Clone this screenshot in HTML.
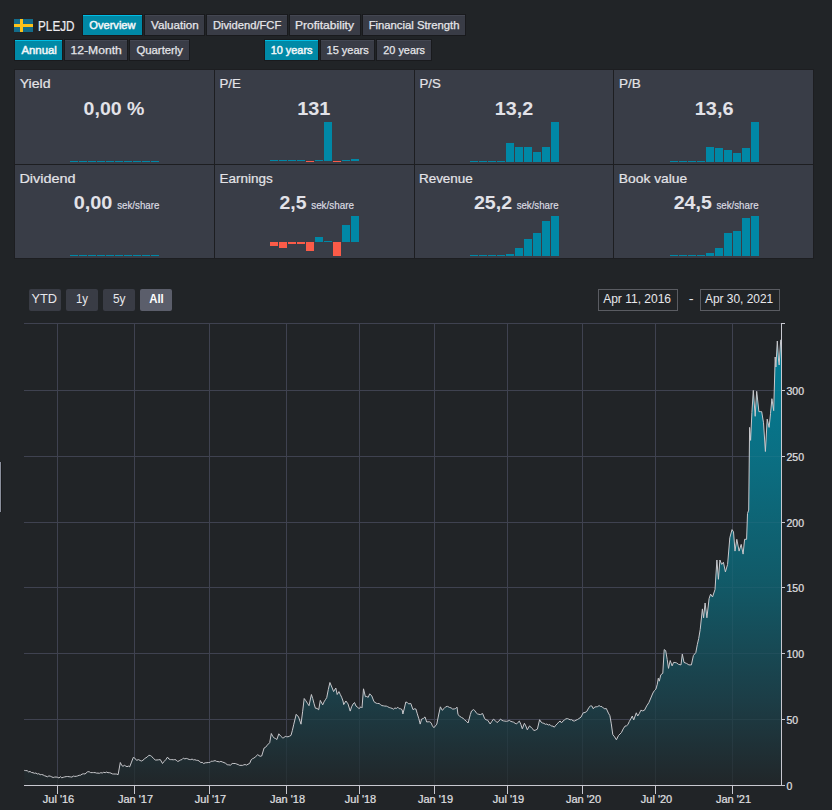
<!DOCTYPE html>
<html><head><meta charset="utf-8">
<style>
html,body{margin:0;padding:0;}
body{width:832px;height:810px;background:#212427;position:relative;overflow:hidden;font-family:"Liberation Sans", sans-serif;color:#e6e6ea;}
svg text{font-family:"Liberation Sans", sans-serif;}
.tb{position:absolute;box-sizing:border-box;height:20px;background:#393c46;border-top:1px solid #444752;box-shadow:0 0 0 1px #191a1d;}
.tb.act{background:#0089a6;border-top:1px solid #00bde4;}
.flag{position:absolute;left:14px;top:19px;width:19px;height:13px;background:#136c8a;}
.flag .v{position:absolute;left:6px;top:0;width:3px;height:13px;background:#fcc21b;}
.flag .h{position:absolute;left:0;top:5px;width:19px;height:3px;background:#fcc21b;}
.grid{position:absolute;left:14px;top:69px;width:800px;height:190px;background:#1d1e21;}
.card{position:absolute;background:#393d47;}
.bar{position:absolute;width:8px;}
.rb{position:absolute;top:289px;width:32px;height:22px;border-radius:2px;background:#393c45;}
.rb.act{background:#5b5e6b;}
.inp{position:absolute;top:289px;height:22px;width:80px;box-sizing:border-box;border:1px solid #5a5c62;}
.ax{font-size:11px;fill:#e0e0e3;stroke:#e0e0e3;stroke-width:0.2px;}
.side{position:absolute;left:0;top:462px;width:1px;height:50px;background:#8a8f9c;border-right:1px solid #18191b;}
</style></head><body>
<div class="flag"><div class="v"></div><div class="h"></div></div>
<div class="tb act" style="left:83px;top:15px;width:59px"></div><div class="tb" style="left:145px;top:15px;width:59px"></div><div class="tb" style="left:207px;top:15px;width:80px"></div><div class="tb" style="left:290px;top:15px;width:70px"></div><div class="tb" style="left:363px;top:15px;width:102px"></div><div class="tb act" style="left:15px;top:40px;width:47px"></div><div class="tb" style="left:65px;top:40px;width:62px"></div><div class="tb" style="left:130px;top:40px;width:59px"></div><div class="tb act" style="left:265px;top:40px;width:53px"></div><div class="tb" style="left:321px;top:40px;width:53px"></div><div class="tb" style="left:377px;top:40px;width:54px"></div>
<div class="grid"></div>
<div class="card" style="left:15px;top:70px;width:199px;height:94px;"></div><div class="bar" style="left:70px;top:161px;height:1px;background:#0088a6"></div><div class="bar" style="left:79px;top:161px;height:1px;background:#0088a6"></div><div class="bar" style="left:88px;top:161px;height:1px;background:#0088a6"></div><div class="bar" style="left:97px;top:161px;height:1px;background:#0088a6"></div><div class="bar" style="left:106px;top:161px;height:1px;background:#0088a6"></div><div class="bar" style="left:115px;top:161px;height:1px;background:#0088a6"></div><div class="bar" style="left:124px;top:161px;height:1px;background:#0088a6"></div><div class="bar" style="left:133px;top:161px;height:1px;background:#0088a6"></div><div class="bar" style="left:142px;top:161px;height:1px;background:#0088a6"></div><div class="bar" style="left:151px;top:161px;height:1px;background:#0088a6"></div><div class="card" style="left:215px;top:70px;width:199px;height:94px;"></div><div class="bar" style="left:270px;top:160px;height:1px;background:#0088a6"></div><div class="bar" style="left:279px;top:160px;height:1px;background:#0088a6"></div><div class="bar" style="left:288px;top:160px;height:1px;background:#0088a6"></div><div class="bar" style="left:297px;top:160px;height:1px;background:#0088a6"></div><div class="bar" style="left:306px;top:161px;height:1px;background:#fb5b48"></div><div class="bar" style="left:315px;top:160px;height:1px;background:#0088a6"></div><div class="bar" style="left:324px;top:122px;height:39px;background:#0088a6"></div><div class="bar" style="left:333px;top:161px;height:1px;background:#fb5b48"></div><div class="bar" style="left:342px;top:160px;height:1px;background:#0088a6"></div><div class="bar" style="left:351px;top:159px;height:2px;background:#0088a6"></div><div class="card" style="left:415px;top:70px;width:198px;height:94px;"></div><div class="bar" style="left:470px;top:161px;height:1px;background:#0088a6"></div><div class="bar" style="left:479px;top:161px;height:1px;background:#0088a6"></div><div class="bar" style="left:488px;top:161px;height:1px;background:#0088a6"></div><div class="bar" style="left:497px;top:161px;height:1px;background:#0088a6"></div><div class="bar" style="left:506px;top:143px;height:19px;background:#0088a6"></div><div class="bar" style="left:515px;top:147px;height:15px;background:#0088a6"></div><div class="bar" style="left:524px;top:147px;height:15px;background:#0088a6"></div><div class="bar" style="left:533px;top:152px;height:10px;background:#0088a6"></div><div class="bar" style="left:542px;top:147px;height:15px;background:#0088a6"></div><div class="bar" style="left:551px;top:122px;height:40px;background:#0088a6"></div><div class="card" style="left:614px;top:70px;width:199px;height:94px;"></div><div class="bar" style="left:670px;top:161px;height:1px;background:#0088a6"></div><div class="bar" style="left:679px;top:161px;height:1px;background:#0088a6"></div><div class="bar" style="left:688px;top:161px;height:1px;background:#0088a6"></div><div class="bar" style="left:697px;top:161px;height:1px;background:#0088a6"></div><div class="bar" style="left:706px;top:147px;height:15px;background:#0088a6"></div><div class="bar" style="left:715px;top:148px;height:14px;background:#0088a6"></div><div class="bar" style="left:724px;top:150px;height:12px;background:#0088a6"></div><div class="bar" style="left:733px;top:153px;height:9px;background:#0088a6"></div><div class="bar" style="left:742px;top:148px;height:14px;background:#0088a6"></div><div class="bar" style="left:751px;top:122px;height:40px;background:#0088a6"></div><div class="card" style="left:15px;top:165px;width:199px;height:93px;"></div><div class="bar" style="left:70px;top:255px;height:1px;background:#0088a6"></div><div class="bar" style="left:79px;top:255px;height:1px;background:#0088a6"></div><div class="bar" style="left:88px;top:255px;height:1px;background:#0088a6"></div><div class="bar" style="left:97px;top:255px;height:1px;background:#0088a6"></div><div class="bar" style="left:106px;top:255px;height:1px;background:#0088a6"></div><div class="bar" style="left:115px;top:255px;height:1px;background:#0088a6"></div><div class="bar" style="left:124px;top:255px;height:1px;background:#0088a6"></div><div class="bar" style="left:133px;top:255px;height:1px;background:#0088a6"></div><div class="bar" style="left:142px;top:255px;height:1px;background:#0088a6"></div><div class="bar" style="left:151px;top:255px;height:1px;background:#0088a6"></div><div class="card" style="left:215px;top:165px;width:199px;height:93px;"></div><div class="bar" style="left:270px;top:242px;height:4px;background:#fb5b48"></div><div class="bar" style="left:279px;top:242px;height:6px;background:#fb5b48"></div><div class="bar" style="left:288px;top:242px;height:2px;background:#fb5b48"></div><div class="bar" style="left:297px;top:242px;height:2px;background:#fb5b48"></div><div class="bar" style="left:306px;top:242px;height:9px;background:#fb5b48"></div><div class="bar" style="left:315px;top:237px;height:5px;background:#0088a6"></div><div class="bar" style="left:324px;top:241px;height:1px;background:#0088a6"></div><div class="bar" style="left:333px;top:242px;height:14px;background:#fb5b48"></div><div class="bar" style="left:342px;top:225px;height:17px;background:#0088a6"></div><div class="bar" style="left:351px;top:216px;height:26px;background:#0088a6"></div><div class="card" style="left:415px;top:165px;width:198px;height:93px;"></div><div class="bar" style="left:470px;top:255px;height:1px;background:#0088a6"></div><div class="bar" style="left:479px;top:255px;height:1px;background:#0088a6"></div><div class="bar" style="left:488px;top:255px;height:1px;background:#0088a6"></div><div class="bar" style="left:497px;top:255px;height:1px;background:#0088a6"></div><div class="bar" style="left:506px;top:254px;height:2px;background:#0088a6"></div><div class="bar" style="left:515px;top:248px;height:8px;background:#0088a6"></div><div class="bar" style="left:524px;top:239px;height:17px;background:#0088a6"></div><div class="bar" style="left:533px;top:233px;height:23px;background:#0088a6"></div><div class="bar" style="left:542px;top:221px;height:35px;background:#0088a6"></div><div class="bar" style="left:551px;top:216px;height:40px;background:#0088a6"></div><div class="card" style="left:614px;top:165px;width:199px;height:93px;"></div><div class="bar" style="left:670px;top:255px;height:1px;background:#0088a6"></div><div class="bar" style="left:679px;top:255px;height:1px;background:#0088a6"></div><div class="bar" style="left:688px;top:255px;height:1px;background:#0088a6"></div><div class="bar" style="left:697px;top:255px;height:1px;background:#0088a6"></div><div class="bar" style="left:706px;top:253px;height:3px;background:#0088a6"></div><div class="bar" style="left:715px;top:248px;height:8px;background:#0088a6"></div><div class="bar" style="left:724px;top:233px;height:23px;background:#0088a6"></div><div class="bar" style="left:733px;top:231px;height:25px;background:#0088a6"></div><div class="bar" style="left:742px;top:218px;height:38px;background:#0088a6"></div><div class="bar" style="left:751px;top:216px;height:40px;background:#0088a6"></div>
<div class="rb" style="left:29px"></div>
<div class="rb" style="left:66px"></div>
<div class="rb" style="left:103px"></div>
<div class="rb act" style="left:140px"></div>
<div class="inp" style="left:598px"></div>
<div class="inp" style="left:700px"></div>
<div class="side"></div>
<svg width="832" height="810" style="position:absolute;left:0;top:0"><defs><linearGradient id="g" gradientUnits="userSpaceOnUse" x1="0" y1="339" x2="0" y2="785"><stop offset="0" stop-color="#007d96"/><stop offset="0.25" stop-color="#0a7084"/><stop offset="0.54" stop-color="#115a68"/><stop offset="0.81" stop-color="#1c3d46"/><stop offset="1" stop-color="#212629"/></linearGradient></defs><path d="M24 323.50 H782 M24 390.50 H782 M24 456.50 H782 M24 522.50 H782 M24 587.50 H782 M24 653.50 H782 M24 719.50 H782 M57.5 323 V785 M134.5 323 V785 M209.5 323 V785 M286.5 323 V785 M359.5 323 V785 M434.5 323 V785 M507.5 323 V785 M582.5 323 V785 M655.5 323 V785 M732.5 323 V785" stroke="#383b47" stroke-width="1" fill="none" shape-rendering="crispEdges"/><path d="M24.3 770.4 L25.7 770.6 L27.2 770.7 L28.6 771.9 L30.1 771.5 L31.5 772.5 L33.0 772.7 L34.4 773.3 L35.9 773.0 L37.3 774.0 L38.8 773.7 L40.2 774.7 L41.6 774.5 L43.1 774.9 L44.5 775.7 L46.0 776.2 L47.4 776.8 L48.9 775.9 L50.3 776.2 L51.8 776.9 L53.2 777.5 L54.6 777.1 L56.1 777.0 L57.5 777.3 L59.0 778.0 L60.4 776.7 L61.8 777.8 L63.3 777.3 L64.7 776.9 L66.2 776.6 L67.6 776.5 L69.1 776.7 L70.5 776.9 L71.9 777.1 L73.4 776.1 L74.8 776.4 L76.3 776.3 L77.7 775.9 L79.2 775.3 L80.6 775.2 L82.1 774.1 L83.5 773.8 L85.0 774.0 L87.5 771.8 L89.1 771.7 L90.6 772.6 L92.2 772.6 L93.6 772.6 L95.1 772.6 L96.5 773.1 L98.0 773.1 L99.4 773.3 L100.8 772.7 L102.3 773.0 L103.7 772.3 L105.2 772.7 L106.6 772.1 L108.0 772.7 L109.5 772.7 L110.9 773.1 L112.3 773.9 L113.8 774.0 L115.2 774.0 L116.7 774.1 L118.1 774.7 L120.3 762.5 L121.7 765.4 L123.0 766.3 L124.4 765.3 L125.7 766.0 L127.0 766.7 L128.4 766.1 L129.7 766.8 L131.5 762.1 L133.3 757.4 L134.9 758.2 L136.5 760.3 L138.7 759.6 L140.1 760.5 L141.5 761.0 L142.9 760.3 L144.4 758.9 L145.9 757.8 L147.3 757.0 L148.8 755.3 L150.2 755.5 L151.6 756.3 L153.4 758.4 L155.3 760.0 L157.0 760.0 L158.6 759.8 L160.3 759.6 L162.5 763.5 L164.2 761.3 L165.8 759.7 L167.5 757.1 L168.9 759.0 L170.4 759.6 L171.8 759.6 L173.3 759.8 L174.7 759.6 L176.1 759.9 L177.6 761.5 L179.1 760.9 L180.5 760.0 L181.9 759.6 L183.4 758.1 L184.8 758.9 L186.3 758.4 L187.7 758.8 L189.2 759.5 L190.6 759.6 L192.1 759.1 L193.5 759.9 L194.9 759.7 L196.4 760.3 L197.8 760.4 L199.3 761.0 L200.7 762.6 L202.2 762.3 L203.6 763.5 L205.3 762.8 L206.9 762.7 L208.6 762.5 L209.9 762.6 L211.2 761.2 L212.5 761.3 L213.8 761.0 L215.1 760.6 L216.6 761.4 L218.0 761.6 L219.5 761.9 L220.9 761.4 L222.4 762.0 L224.0 762.6 L225.6 763.3 L227.2 764.7 L228.8 764.9 L230.5 765.1 L232.2 763.5 L233.9 763.5 L235.3 763.5 L236.8 764.1 L238.2 764.6 L239.7 765.4 L241.0 765.3 L242.4 765.4 L243.7 764.9 L245.1 764.5 L246.4 765.1 L248.0 764.2 L249.6 763.5 L251.2 759.8 L252.5 758.7 L253.9 758.1 L255.2 757.1 L257.7 754.7 L260.1 756.3 L261.7 756.0 L264.1 748.0 L265.7 747.2 L267.3 745.1 L269.7 742.7 L271.3 733.5 L272.9 736.7 L274.2 737.9 L275.6 738.6 L276.9 739.5 L278.8 733.8 L280.6 736.0 L282.5 737.8 L283.8 737.7 L285.2 736.4 L286.5 736.7 L288.0 736.8 L289.5 736.2 L291.0 735.4 L292.4 730.3 L293.8 724.2 L296.2 714.3 L298.6 717.0 L301.0 724.2 L302.6 711.8 L304.2 698.5 L305.8 700.7 L307.4 703.2 L309.0 705.7 L311.4 694.5 L312.7 698.5 L314.1 703.8 L315.4 708.2 L317.0 708.4 L318.7 709.8 L320.3 700.4 L322.7 704.9 L324.0 701.9 L325.4 699.7 L326.7 697.7 L328.3 689.6 L329.9 682.5 L332.2 688.0 L333.6 691.6 L335.8 688.0 L337.2 694.5 L338.9 691.6 L340.3 694.5 L341.6 697.2 L343.0 701.0 L343.7 704.6 L345.9 701.0 L348.0 703.9 L350.2 711.1 L351.6 706.8 L353.1 704.0 L354.5 702.5 L356.0 706.1 L357.4 706.9 L358.9 708.7 L361.0 706.8 L362.0 707.8 L363.5 688.8 L365.4 696.7 L366.8 696.5 L368.2 697.4 L369.7 693.8 L371.8 696.0 L374.0 701.7 L376.2 703.2 L377.6 703.5 L379.1 703.5 L380.5 704.6 L381.9 705.6 L383.4 705.8 L384.8 706.1 L386.3 706.1 L387.7 706.7 L389.2 707.5 L390.6 707.9 L392.1 708.4 L393.5 709.2 L394.9 708.0 L396.4 708.4 L397.8 707.2 L399.2 708.7 L400.7 708.8 L402.1 709.7 L402.9 714.0 L404.4 708.0 L405.8 702.0 L407.2 702.4 L408.6 703.9 L410.8 703.5 L413.0 709.7 L414.4 708.8 L415.9 709.0 L417.3 713.8 L418.8 718.7 L420.2 724.1 L421.6 719.1 L423.3 718.5 L425.0 716.9 L426.7 722.0 L428.1 721.8 L429.6 721.8 L431.0 722.7 L432.4 725.8 L433.9 727.7 L435.4 725.9 L436.8 724.1 L438.6 715.0 L440.4 706.8 L442.2 710.3 L444.0 708.6 L445.8 706.7 L447.6 706.4 L449.4 707.4 L451.1 707.9 L452.7 709.1 L454.4 708.9 L455.7 708.5 L457.0 707.1 L458.0 714.6 L459.8 716.3 L461.6 717.5 L463.1 718.3 L464.5 719.7 L466.3 721.2 L468.1 723.0 L470.3 714.6 L471.5 711.0 L473.5 709.6 L474.8 710.6 L476.2 712.8 L477.5 713.9 L478.9 714.3 L480.4 714.6 L482.6 713.5 L484.7 718.7 L486.1 719.8 L487.6 720.1 L490.2 724.0 L491.8 721.4 L493.4 719.2 L495.2 720.5 L497.0 722.6 L498.8 721.2 L500.6 719.0 L502.0 720.4 L503.5 720.9 L504.9 721.1 L506.4 721.3 L507.8 721.1 L509.3 720.4 L510.8 721.4 L512.2 721.8 L513.6 722.2 L515.1 723.3 L516.5 724.0 L518.0 722.3 L519.4 721.1 L520.8 724.3 L522.3 728.8 L524.4 723.3 L525.8 725.9 L527.3 729.8 L529.5 725.9 L530.9 727.1 L532.4 728.6 L533.8 730.5 L535.6 730.1 L537.4 729.1 L539.6 719.7 L541.0 722.0 L542.5 723.0 L543.9 723.3 L545.4 724.3 L546.8 724.0 L548.4 725.0 L550.0 724.6 L551.4 726.1 L552.9 726.1 L554.3 727.2 L555.8 725.2 L557.2 723.9 L558.7 722.1 L560.1 721.0 L561.5 722.9 L563.0 721.0 L564.4 720.0 L565.8 718.9 L567.3 718.6 L568.7 719.1 L570.2 719.8 L571.6 719.6 L573.0 720.8 L574.5 721.0 L576.0 720.2 L577.4 719.6 L578.9 718.6 L581.0 717.1 L583.2 712.8 L585.0 712.5 L586.8 711.4 L589.0 707.3 L590.4 706.0 L591.8 705.9 L593.3 708.8 L594.7 707.0 L596.2 706.8 L597.6 706.6 L599.1 705.6 L600.5 706.5 L602.0 706.6 L603.4 708.1 L604.8 708.8 L606.3 708.5 L608.4 713.1 L609.9 715.7 L611.3 723.9 L612.8 734.7 L614.6 736.9 L616.4 739.8 L618.5 735.5 L620.0 734.0 L621.4 732.6 L623.2 728.9 L625.0 726.1 L626.5 725.8 L627.9 724.6 L629.3 721.5 L630.8 718.9 L632.3 716.0 L633.7 720.0 L636.3 712.8 L637.7 716.0 L639.3 713.5 L640.9 710.2 L642.7 710.9 L644.5 710.2 L646.7 705.9 L648.8 702.7 L650.4 699.0 L652.9 693.0 L654.4 690.6 L655.9 689.1 L657.3 684.2 L658.3 678.2 L659.3 681.2 L660.8 674.8 L662.8 673.3 L664.2 649.6 L665.7 650.6 L667.2 659.5 L668.5 668.4 L670.2 660.5 L672.1 665.9 L673.6 662.4 L675.1 662.5 L676.6 662.9 L678.6 664.4 L681.0 664.9 L682.3 654.1 L684.0 662.4 L686.5 663.4 L688.9 664.9 L691.4 664.9 L693.4 655.5 L695.8 652.6 L697.3 644.7 L698.7 638.5 L700.2 629.6 L702.4 608.9 L703.6 617.8 L705.1 603.0 L706.9 617.8 L709.1 598.5 L710.6 594.1 L712.5 597.0 L715.0 589.6 L716.9 560.0 L718.4 579.3 L719.9 560.0 L721.7 564.4 L723.4 562.2 L725.4 571.9 L727.6 564.4 L729.8 537.8 L732.0 529.6 L733.5 531.9 L735.0 551.1 L736.8 539.3 L739.1 551.1 L741.2 544.4 L743.1 554.1 L744.6 539.3 L746.6 539.3 L747.5 513.5 L748.7 510.1 L749.6 427.4 L750.6 440.4 L751.9 412.6 L753.3 390.4 L755.2 416.3 L756.7 391.3 L758.9 411.7 L760.3 411.6 L761.7 411.7 L763.5 422.8 L765.4 451.5 L767.2 419.1 L769.1 427.4 L770.5 413.7 L771.9 398.7 L773.7 410.7 L775.2 357.0 L775.9 367.0 L777.3 341.0 L778.6 361.0 L779.2 365.0 L780.7 340.0 L781.5 340.5 L781.5 785 L24.3 785 Z" fill="url(#g)" stroke="none"/><path d="M24 323.50 H782 M24 390.50 H782 M24 456.50 H782 M24 522.50 H782 M24 587.50 H782 M24 653.50 H782 M24 719.50 H782 M57.5 323 V785 M134.5 323 V785 M209.5 323 V785 M286.5 323 V785 M359.5 323 V785 M434.5 323 V785 M507.5 323 V785 M582.5 323 V785 M655.5 323 V785 M732.5 323 V785" stroke="rgba(160,170,200,0.07)" stroke-width="1" fill="none" shape-rendering="crispEdges"/><path d="M24.3 770.4 L25.7 770.6 L27.2 770.7 L28.6 771.9 L30.1 771.5 L31.5 772.5 L33.0 772.7 L34.4 773.3 L35.9 773.0 L37.3 774.0 L38.8 773.7 L40.2 774.7 L41.6 774.5 L43.1 774.9 L44.5 775.7 L46.0 776.2 L47.4 776.8 L48.9 775.9 L50.3 776.2 L51.8 776.9 L53.2 777.5 L54.6 777.1 L56.1 777.0 L57.5 777.3 L59.0 778.0 L60.4 776.7 L61.8 777.8 L63.3 777.3 L64.7 776.9 L66.2 776.6 L67.6 776.5 L69.1 776.7 L70.5 776.9 L71.9 777.1 L73.4 776.1 L74.8 776.4 L76.3 776.3 L77.7 775.9 L79.2 775.3 L80.6 775.2 L82.1 774.1 L83.5 773.8 L85.0 774.0 L87.5 771.8 L89.1 771.7 L90.6 772.6 L92.2 772.6 L93.6 772.6 L95.1 772.6 L96.5 773.1 L98.0 773.1 L99.4 773.3 L100.8 772.7 L102.3 773.0 L103.7 772.3 L105.2 772.7 L106.6 772.1 L108.0 772.7 L109.5 772.7 L110.9 773.1 L112.3 773.9 L113.8 774.0 L115.2 774.0 L116.7 774.1 L118.1 774.7 L120.3 762.5 L121.7 765.4 L123.0 766.3 L124.4 765.3 L125.7 766.0 L127.0 766.7 L128.4 766.1 L129.7 766.8 L131.5 762.1 L133.3 757.4 L134.9 758.2 L136.5 760.3 L138.7 759.6 L140.1 760.5 L141.5 761.0 L142.9 760.3 L144.4 758.9 L145.9 757.8 L147.3 757.0 L148.8 755.3 L150.2 755.5 L151.6 756.3 L153.4 758.4 L155.3 760.0 L157.0 760.0 L158.6 759.8 L160.3 759.6 L162.5 763.5 L164.2 761.3 L165.8 759.7 L167.5 757.1 L168.9 759.0 L170.4 759.6 L171.8 759.6 L173.3 759.8 L174.7 759.6 L176.1 759.9 L177.6 761.5 L179.1 760.9 L180.5 760.0 L181.9 759.6 L183.4 758.1 L184.8 758.9 L186.3 758.4 L187.7 758.8 L189.2 759.5 L190.6 759.6 L192.1 759.1 L193.5 759.9 L194.9 759.7 L196.4 760.3 L197.8 760.4 L199.3 761.0 L200.7 762.6 L202.2 762.3 L203.6 763.5 L205.3 762.8 L206.9 762.7 L208.6 762.5 L209.9 762.6 L211.2 761.2 L212.5 761.3 L213.8 761.0 L215.1 760.6 L216.6 761.4 L218.0 761.6 L219.5 761.9 L220.9 761.4 L222.4 762.0 L224.0 762.6 L225.6 763.3 L227.2 764.7 L228.8 764.9 L230.5 765.1 L232.2 763.5 L233.9 763.5 L235.3 763.5 L236.8 764.1 L238.2 764.6 L239.7 765.4 L241.0 765.3 L242.4 765.4 L243.7 764.9 L245.1 764.5 L246.4 765.1 L248.0 764.2 L249.6 763.5 L251.2 759.8 L252.5 758.7 L253.9 758.1 L255.2 757.1 L257.7 754.7 L260.1 756.3 L261.7 756.0 L264.1 748.0 L265.7 747.2 L267.3 745.1 L269.7 742.7 L271.3 733.5 L272.9 736.7 L274.2 737.9 L275.6 738.6 L276.9 739.5 L278.8 733.8 L280.6 736.0 L282.5 737.8 L283.8 737.7 L285.2 736.4 L286.5 736.7 L288.0 736.8 L289.5 736.2 L291.0 735.4 L292.4 730.3 L293.8 724.2 L296.2 714.3 L298.6 717.0 L301.0 724.2 L302.6 711.8 L304.2 698.5 L305.8 700.7 L307.4 703.2 L309.0 705.7 L311.4 694.5 L312.7 698.5 L314.1 703.8 L315.4 708.2 L317.0 708.4 L318.7 709.8 L320.3 700.4 L322.7 704.9 L324.0 701.9 L325.4 699.7 L326.7 697.7 L328.3 689.6 L329.9 682.5 L332.2 688.0 L333.6 691.6 L335.8 688.0 L337.2 694.5 L338.9 691.6 L340.3 694.5 L341.6 697.2 L343.0 701.0 L343.7 704.6 L345.9 701.0 L348.0 703.9 L350.2 711.1 L351.6 706.8 L353.1 704.0 L354.5 702.5 L356.0 706.1 L357.4 706.9 L358.9 708.7 L361.0 706.8 L362.0 707.8 L363.5 688.8 L365.4 696.7 L366.8 696.5 L368.2 697.4 L369.7 693.8 L371.8 696.0 L374.0 701.7 L376.2 703.2 L377.6 703.5 L379.1 703.5 L380.5 704.6 L381.9 705.6 L383.4 705.8 L384.8 706.1 L386.3 706.1 L387.7 706.7 L389.2 707.5 L390.6 707.9 L392.1 708.4 L393.5 709.2 L394.9 708.0 L396.4 708.4 L397.8 707.2 L399.2 708.7 L400.7 708.8 L402.1 709.7 L402.9 714.0 L404.4 708.0 L405.8 702.0 L407.2 702.4 L408.6 703.9 L410.8 703.5 L413.0 709.7 L414.4 708.8 L415.9 709.0 L417.3 713.8 L418.8 718.7 L420.2 724.1 L421.6 719.1 L423.3 718.5 L425.0 716.9 L426.7 722.0 L428.1 721.8 L429.6 721.8 L431.0 722.7 L432.4 725.8 L433.9 727.7 L435.4 725.9 L436.8 724.1 L438.6 715.0 L440.4 706.8 L442.2 710.3 L444.0 708.6 L445.8 706.7 L447.6 706.4 L449.4 707.4 L451.1 707.9 L452.7 709.1 L454.4 708.9 L455.7 708.5 L457.0 707.1 L458.0 714.6 L459.8 716.3 L461.6 717.5 L463.1 718.3 L464.5 719.7 L466.3 721.2 L468.1 723.0 L470.3 714.6 L471.5 711.0 L473.5 709.6 L474.8 710.6 L476.2 712.8 L477.5 713.9 L478.9 714.3 L480.4 714.6 L482.6 713.5 L484.7 718.7 L486.1 719.8 L487.6 720.1 L490.2 724.0 L491.8 721.4 L493.4 719.2 L495.2 720.5 L497.0 722.6 L498.8 721.2 L500.6 719.0 L502.0 720.4 L503.5 720.9 L504.9 721.1 L506.4 721.3 L507.8 721.1 L509.3 720.4 L510.8 721.4 L512.2 721.8 L513.6 722.2 L515.1 723.3 L516.5 724.0 L518.0 722.3 L519.4 721.1 L520.8 724.3 L522.3 728.8 L524.4 723.3 L525.8 725.9 L527.3 729.8 L529.5 725.9 L530.9 727.1 L532.4 728.6 L533.8 730.5 L535.6 730.1 L537.4 729.1 L539.6 719.7 L541.0 722.0 L542.5 723.0 L543.9 723.3 L545.4 724.3 L546.8 724.0 L548.4 725.0 L550.0 724.6 L551.4 726.1 L552.9 726.1 L554.3 727.2 L555.8 725.2 L557.2 723.9 L558.7 722.1 L560.1 721.0 L561.5 722.9 L563.0 721.0 L564.4 720.0 L565.8 718.9 L567.3 718.6 L568.7 719.1 L570.2 719.8 L571.6 719.6 L573.0 720.8 L574.5 721.0 L576.0 720.2 L577.4 719.6 L578.9 718.6 L581.0 717.1 L583.2 712.8 L585.0 712.5 L586.8 711.4 L589.0 707.3 L590.4 706.0 L591.8 705.9 L593.3 708.8 L594.7 707.0 L596.2 706.8 L597.6 706.6 L599.1 705.6 L600.5 706.5 L602.0 706.6 L603.4 708.1 L604.8 708.8 L606.3 708.5 L608.4 713.1 L609.9 715.7 L611.3 723.9 L612.8 734.7 L614.6 736.9 L616.4 739.8 L618.5 735.5 L620.0 734.0 L621.4 732.6 L623.2 728.9 L625.0 726.1 L626.5 725.8 L627.9 724.6 L629.3 721.5 L630.8 718.9 L632.3 716.0 L633.7 720.0 L636.3 712.8 L637.7 716.0 L639.3 713.5 L640.9 710.2 L642.7 710.9 L644.5 710.2 L646.7 705.9 L648.8 702.7 L650.4 699.0 L652.9 693.0 L654.4 690.6 L655.9 689.1 L657.3 684.2 L658.3 678.2 L659.3 681.2 L660.8 674.8 L662.8 673.3 L664.2 649.6 L665.7 650.6 L667.2 659.5 L668.5 668.4 L670.2 660.5 L672.1 665.9 L673.6 662.4 L675.1 662.5 L676.6 662.9 L678.6 664.4 L681.0 664.9 L682.3 654.1 L684.0 662.4 L686.5 663.4 L688.9 664.9 L691.4 664.9 L693.4 655.5 L695.8 652.6 L697.3 644.7 L698.7 638.5 L700.2 629.6 L702.4 608.9 L703.6 617.8 L705.1 603.0 L706.9 617.8 L709.1 598.5 L710.6 594.1 L712.5 597.0 L715.0 589.6 L716.9 560.0 L718.4 579.3 L719.9 560.0 L721.7 564.4 L723.4 562.2 L725.4 571.9 L727.6 564.4 L729.8 537.8 L732.0 529.6 L733.5 531.9 L735.0 551.1 L736.8 539.3 L739.1 551.1 L741.2 544.4 L743.1 554.1 L744.6 539.3 L746.6 539.3 L747.5 513.5 L748.7 510.1 L749.6 427.4 L750.6 440.4 L751.9 412.6 L753.3 390.4 L755.2 416.3 L756.7 391.3 L758.9 411.7 L760.3 411.6 L761.7 411.7 L763.5 422.8 L765.4 451.5 L767.2 419.1 L769.1 427.4 L770.5 413.7 L771.9 398.7 L773.7 410.7 L775.2 357.0 L775.9 367.0 L777.3 341.0 L778.6 361.0 L779.2 365.0 L780.7 340.0 L781.5 340.5" fill="none" stroke="#c8c8cc" stroke-width="1" stroke-linejoin="round"/><path d="M24 785.5 H782 M781.5 323 V786 M781 323.5 H785" stroke="#c8c8d0" stroke-width="1" fill="none" shape-rendering="crispEdges"/><path d="M57.5 785 V794 M134.5 785 V794 M209.5 785 V794 M286.5 785 V794 M359.5 785 V794 M434.5 785 V794 M507.5 785 V794 M582.5 785 V794 M655.5 785 V794 M732.5 785 V794 M781 785.50 H785 M781 719.50 H785 M781 653.50 H785 M781 587.50 H785 M781 522.50 H785 M781 456.50 H785 M781 390.50 H785" stroke="#c8c8d0" stroke-width="1" fill="none" shape-rendering="crispEdges"/><text x="58.5" y="803" text-anchor="middle" class="ax">Jul &#39;16</text><text x="135.5" y="803" text-anchor="middle" class="ax">Jan &#39;17</text><text x="210.5" y="803" text-anchor="middle" class="ax">Jul &#39;17</text><text x="287.5" y="803" text-anchor="middle" class="ax">Jan &#39;18</text><text x="360.5" y="803" text-anchor="middle" class="ax">Jul &#39;18</text><text x="435.5" y="803" text-anchor="middle" class="ax">Jan &#39;19</text><text x="508.5" y="803" text-anchor="middle" class="ax">Jul &#39;19</text><text x="583.5" y="803" text-anchor="middle" class="ax">Jan &#39;20</text><text x="656.5" y="803" text-anchor="middle" class="ax">Jul &#39;20</text><text x="733.5" y="803" text-anchor="middle" class="ax">Jan &#39;21</text><text x="786.5" y="789.5" class="ax" style="font-size:10.5px">0</text><text x="786.5" y="723.5" class="ax" style="font-size:10.5px">50</text><text x="786.5" y="657.5" class="ax" style="font-size:10.5px">100</text><text x="786.5" y="591.5" class="ax" style="font-size:10.5px">150</text><text x="786.5" y="526.5" class="ax" style="font-size:10.5px">200</text><text x="786.5" y="460.5" class="ax" style="font-size:10.5px">250</text><text x="786.5" y="394.5" class="ax" style="font-size:10.5px">300</text><text x="38.04" y="31" font-size="14" font-weight="normal" fill="#ececf0" stroke="#ececf0" stroke-width="0.2" textLength="36.53" lengthAdjust="spacingAndGlyphs">PLEJD</text><text x="89.27" y="29" font-size="11.5" font-weight="normal" fill="#f2f6f8" stroke="#f2f6f8" stroke-width="0.5" textLength="46.31" lengthAdjust="spacingAndGlyphs">Overview</text><text x="151.05" y="29" font-size="11.5" font-weight="normal" fill="#e6e6ea" stroke="#e6e6ea" stroke-width="0.25" textLength="47.61" lengthAdjust="spacingAndGlyphs">Valuation</text><text x="212.88" y="29" font-size="11.5" font-weight="normal" fill="#e6e6ea" stroke="#e6e6ea" stroke-width="0.25" textLength="68.41" lengthAdjust="spacingAndGlyphs">Dividend/FCF</text><text x="295.00" y="29" font-size="11.5" font-weight="normal" fill="#e6e6ea" stroke="#e6e6ea" stroke-width="0.25" textLength="58.94" lengthAdjust="spacingAndGlyphs">Profitability</text><text x="368.67" y="29" font-size="11.5" font-weight="normal" fill="#e6e6ea" stroke="#e6e6ea" stroke-width="0.25" textLength="90.86" lengthAdjust="spacingAndGlyphs">Financial Strength</text><text x="21.45" y="54" font-size="11.5" font-weight="normal" fill="#f2f6f8" stroke="#f2f6f8" stroke-width="0.5" textLength="35.40" lengthAdjust="spacingAndGlyphs">Annual</text><text x="70.55" y="54" font-size="11.5" font-weight="normal" fill="#e6e6ea" stroke="#e6e6ea" stroke-width="0.25" textLength="51.22" lengthAdjust="spacingAndGlyphs">12-Month</text><text x="136.46" y="54" font-size="11.5" font-weight="normal" fill="#e6e6ea" stroke="#e6e6ea" stroke-width="0.25" textLength="46.58" lengthAdjust="spacingAndGlyphs">Quarterly</text><text x="270.65" y="54" font-size="11.5" font-weight="normal" fill="#f2f6f8" stroke="#f2f6f8" stroke-width="0.5" textLength="41.84" lengthAdjust="spacingAndGlyphs">10 years</text><text x="326.54" y="54" font-size="11.5" font-weight="normal" fill="#e6e6ea" stroke="#e6e6ea" stroke-width="0.25" textLength="42.25" lengthAdjust="spacingAndGlyphs">15 years</text><text x="383.33" y="54" font-size="11.5" font-weight="normal" fill="#e6e6ea" stroke="#e6e6ea" stroke-width="0.25" textLength="41.65" lengthAdjust="spacingAndGlyphs">20 years</text><text x="19.69" y="88" font-size="13.5" font-weight="normal" fill="#e4e4e8" stroke="#e4e4e8" stroke-width="0.2" textLength="30.92" lengthAdjust="spacingAndGlyphs">Yield</text><text x="219.42" y="88" font-size="13.5" font-weight="normal" fill="#e4e4e8" stroke="#e4e4e8" stroke-width="0.2" textLength="21.38" lengthAdjust="spacingAndGlyphs">P/E</text><text x="419.42" y="88" font-size="13.5" font-weight="normal" fill="#e4e4e8" stroke="#e4e4e8" stroke-width="0.2" textLength="21.38" lengthAdjust="spacingAndGlyphs">P/S</text><text x="618.90" y="88" font-size="13.5" font-weight="normal" fill="#e4e4e8" stroke="#e4e4e8" stroke-width="0.2" textLength="21.81" lengthAdjust="spacingAndGlyphs">P/B</text><text x="19.42" y="183" font-size="13.5" font-weight="normal" fill="#e4e4e8" stroke="#e4e4e8" stroke-width="0.2" textLength="56.22" lengthAdjust="spacingAndGlyphs">Dividend</text><text x="219.50" y="183" font-size="13.5" font-weight="normal" fill="#e4e4e8" stroke="#e4e4e8" stroke-width="0.2" textLength="53.28" lengthAdjust="spacingAndGlyphs">Earnings</text><text x="418.90" y="183" font-size="13.5" font-weight="normal" fill="#e4e4e8" stroke="#e4e4e8" stroke-width="0.2" textLength="53.99" lengthAdjust="spacingAndGlyphs">Revenue</text><text x="618.87" y="183" font-size="13.5" font-weight="normal" fill="#e4e4e8" stroke="#e4e4e8" stroke-width="0.2" textLength="68.33" lengthAdjust="spacingAndGlyphs">Book value</text><text x="83.63" y="115" font-size="19" font-weight="bold" fill="#e2e2e8" textLength="60.79" lengthAdjust="spacingAndGlyphs">0,00 %</text><text x="297.24" y="115" font-size="19" font-weight="bold" fill="#e2e2e8" textLength="33.18" lengthAdjust="spacingAndGlyphs">131</text><text x="494.76" y="115" font-size="19" font-weight="bold" fill="#e2e2e8" textLength="38.35" lengthAdjust="spacingAndGlyphs">13,2</text><text x="694.74" y="115" font-size="19" font-weight="bold" fill="#e2e2e8" textLength="38.77" lengthAdjust="spacingAndGlyphs">13,6</text><text x="73.72" y="209" font-size="19" font-weight="bold" fill="#e2e2e8" textLength="38.70" lengthAdjust="spacingAndGlyphs">0,00</text><text x="279.54" y="209" font-size="19" font-weight="bold" fill="#e2e2e8" textLength="26.99" lengthAdjust="spacingAndGlyphs">2,5</text><text x="473.93" y="209" font-size="19" font-weight="bold" fill="#e2e2e8" textLength="38.18" lengthAdjust="spacingAndGlyphs">25,2</text><text x="673.73" y="209" font-size="19" font-weight="bold" fill="#e2e2e8" textLength="38.12" lengthAdjust="spacingAndGlyphs">24,5</text><text x="117.24" y="209" font-size="11" font-weight="normal" fill="#dcdce2" stroke="#dcdce2" stroke-width="0.2" textLength="42.10" lengthAdjust="spacingAndGlyphs">sek/share</text><text x="311.23" y="209" font-size="11" font-weight="normal" fill="#dcdce2" stroke="#dcdce2" stroke-width="0.2" textLength="42.71" lengthAdjust="spacingAndGlyphs">sek/share</text><text x="516.64" y="209" font-size="11" font-weight="normal" fill="#dcdce2" stroke="#dcdce2" stroke-width="0.2" textLength="41.90" lengthAdjust="spacingAndGlyphs">sek/share</text><text x="716.44" y="209" font-size="11" font-weight="normal" fill="#dcdce2" stroke="#dcdce2" stroke-width="0.2" textLength="42.10" lengthAdjust="spacingAndGlyphs">sek/share</text><text x="31.58" y="303" font-size="12" font-weight="normal" fill="#e8e8ec" textLength="25.50" lengthAdjust="spacingAndGlyphs">YTD</text><text x="76.05" y="303" font-size="12" font-weight="normal" fill="#e8e8ec" textLength="12.02" lengthAdjust="spacingAndGlyphs">1y</text><text x="113.00" y="303" font-size="12" font-weight="normal" fill="#e8e8ec" textLength="12.57" lengthAdjust="spacingAndGlyphs">5y</text><text x="149.21" y="303" font-size="12" font-weight="bold" fill="#ffffff" textLength="14.58" lengthAdjust="spacingAndGlyphs">All</text><text x="603.15" y="303" font-size="12" font-weight="normal" fill="#e8e8ec" textLength="67.88" lengthAdjust="spacingAndGlyphs">Apr 11, 2016</text><text x="688.84" y="303" font-size="12" font-weight="normal" fill="#e8e8ec" textLength="4.82" lengthAdjust="spacingAndGlyphs">-</text><text x="704.95" y="303" font-size="12" font-weight="normal" fill="#e8e8ec" textLength="68.32" lengthAdjust="spacingAndGlyphs">Apr 30, 2021</text></svg>
</body></html>
